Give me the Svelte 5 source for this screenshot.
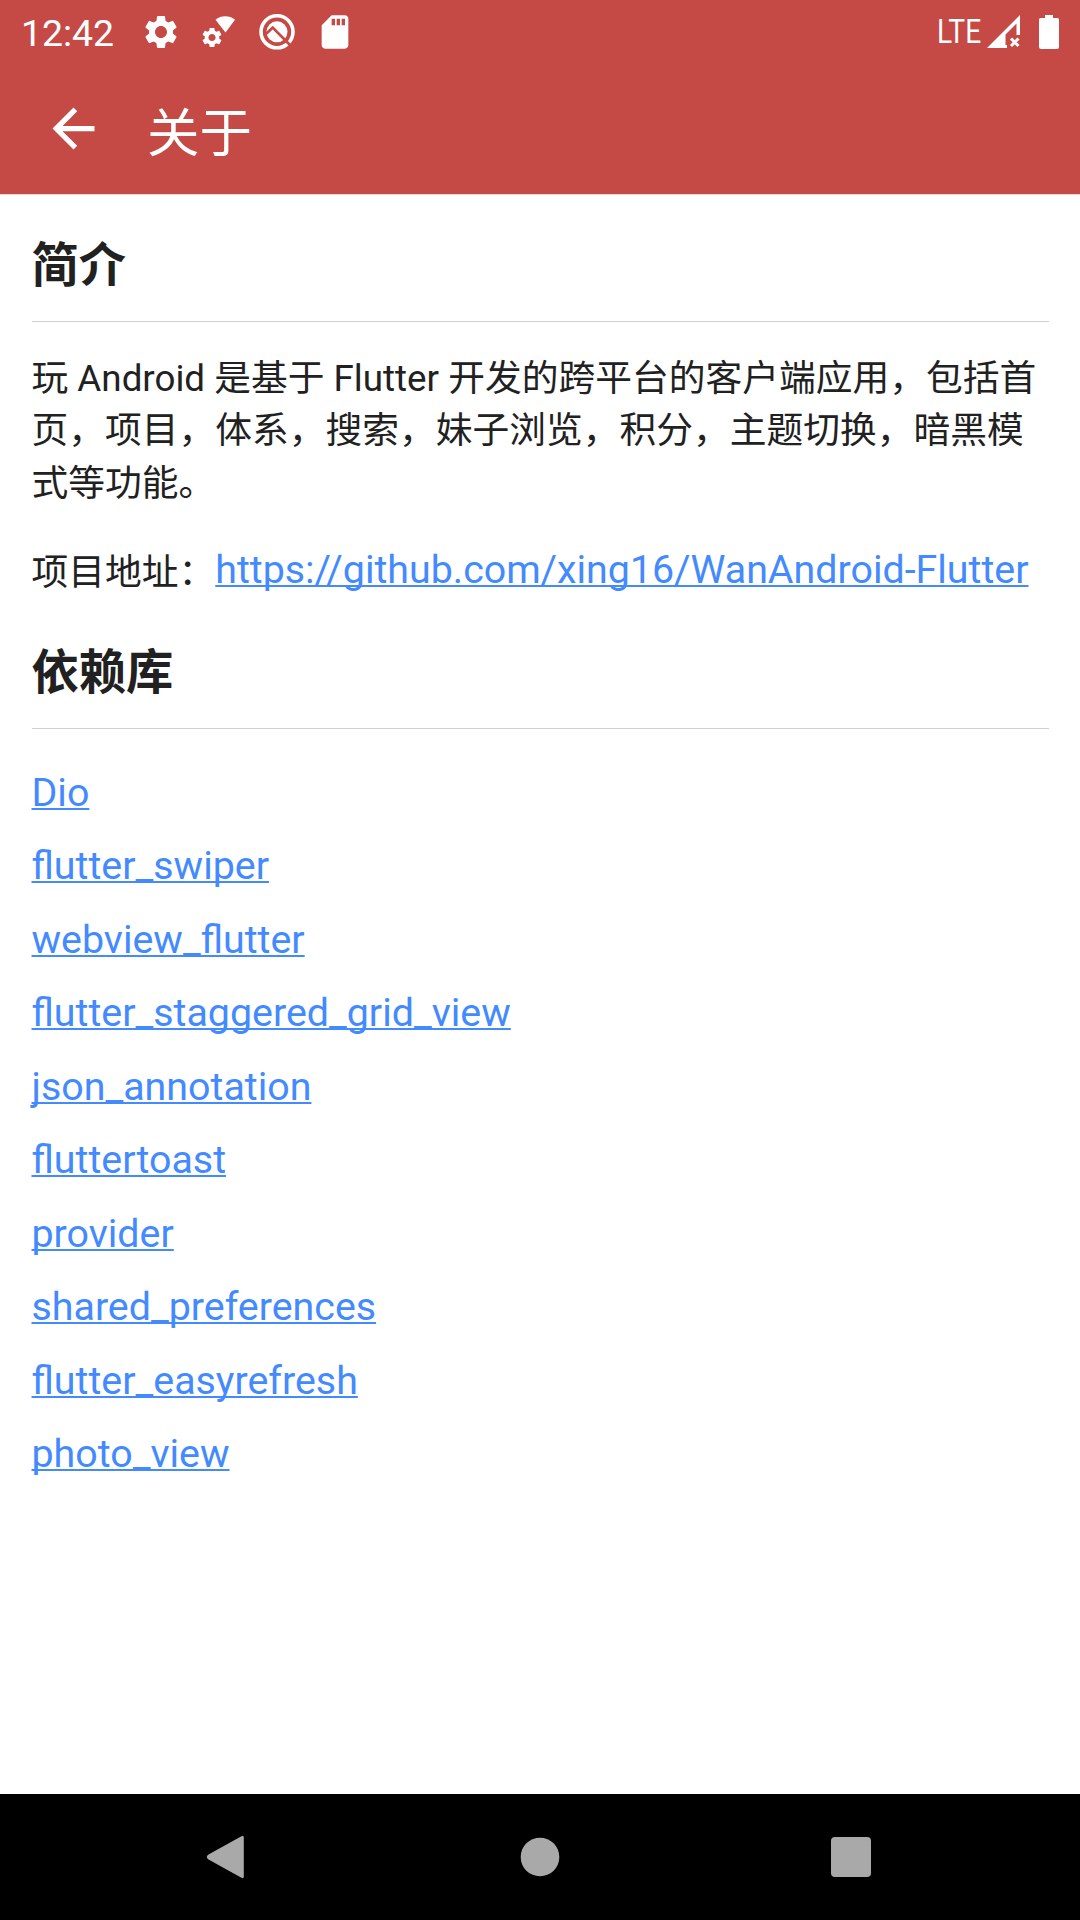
<script>
  const links = [
    'Dio',
    'flutter_swiper',
    'webview_flutter',
    'flutter_staggered_grid_view',
    'json_annotation',
    'fluttertoast',
    'provider',
    'shared_preferences',
    'flutter_easyrefresh',
    'photo_view',
  ];
  const gear =
    'M19.14 12.94c.04-.3.06-.61.06-.94 0-.32-.02-.64-.07-.94l2.03-1.58c.18-.14.23-.41.12-.61l-1.92-3.32c-.12-.22-.37-.29-.59-.22l-2.39.96c-.5-.38-1.03-.7-1.62-.94l-.36-2.54c-.04-.24-.24-.41-.48-.41h-3.84c-.24 0-.43.17-.47.41l-.36 2.54c-.59.24-1.13.57-1.62.94l-2.39-.96c-.22-.08-.47 0-.59.22L2.74 8.87c-.12.21-.08.47.12.61l2.03 1.58c-.05.3-.09.63-.09.94s.02.64.07.94l-2.03 1.58c-.18.14-.23.41-.12.61l1.92 3.32c.12.22.37.29.59.22l2.39-.96c.5.38 1.03.7 1.62.94l.36 2.54c.05.24.24.41.48.41h3.84c.24 0 .44-.17.47-.41l.36-2.54c.59-.24 1.13-.56 1.62-.94l2.39.96c.22.08.47 0 .59-.22l1.92-3.32c.12-.22.07-.47-.12-.61l-2.01-1.58zM12 15.6c-1.98 0-3.6-1.62-3.6-3.6s1.62-3.6 3.6-3.6 3.6 1.62 3.6 3.6-1.62 3.6-3.6 3.6z';
</script>

<div class="screen">
  <header>
    <div class="status">
      <span class="time">12:42</span>
      <svg class="notif" viewBox="0 0 24 24"><path d={gear} /></svg>
      <svg class="notif" viewBox="0 0 40 40">
        <path d="M14.5 7.7C20 3.2 28.500 3.2 34 7.7L24.500 20.500Z" transform="translate(2 0)" />
        <g transform="translate(1 13.500)"><path d={gear} /></g>
      </svg>
      <svg class="notif" viewBox="0 0 40 40">
        <circle cx="20" cy="19.800" r="16" fill="none" stroke="#fff" stroke-width="3.600" />
        <circle cx="20" cy="19.800" r="10.500" />
        <path d="M9.500 21.500L15.700 15.600L34 34" fill="none" stroke="#c54a46" stroke-width="2.800" />
      </svg>
      <svg class="notif" viewBox="0 0 24 24">
        <path d="M18 2h-8L4.020 8 4 20c0 1.100.9 2 2 2h12c1.100 0 2-.9 2-2V4c0-1.100-.9-2-2-2zm-6 6h-2V4h2v4zm3 0h-2V4h2v4zm3 0h-2V4h2v4z" />
      </svg>
      <span class="space"></span>
      <span class="lte">LTE</span>
      <svg class="signal" viewBox="0 0 34 34">
        <path d="M0 33L33 0V20H29.500V8.500L18.500 19.500V30H20V33Z" />
        <path d="M24 23.500L31.500 31M31.500 23.500L24 31" stroke="#fff" stroke-width="3" />
      </svg>
      <svg class="battery" viewBox="0 0 20 34">
        <path d="M6 0H14V3H18.500Q20 3 20 4.500V32Q20 34 18 34H2Q0 34 0 32V4.500Q0 3 1.500 3H6Z" />
      </svg>
    </div>
    <div class="bar">
      <svg class="back" viewBox="0 0 24 24"><path d="M20 11H7.830l5.590-5.590L12 4l-8 8 8 8 1.410-1.410L7.830 13H20v-2z" /></svg>
      <h1>关于</h1>
    </div>
  </header>

  <main>
    <h2>简介</h2>
    <p>玩 Android 是基于 Flutter 开发的跨平台的客户端应用，包括首页，项目，体系，搜索，妹子浏览，积分，主题切换，暗黑模式等功能。</p>
    <div class="address">项目地址：<span class="link">https://github.com/xing16/WanAndroid-Flutter</span></div>
    <h2 class="second">依赖库</h2>
    <ul>
      {#each links as name}
        <li><span class="link">{name}</span></li>
      {/each}
    </ul>
  </main>

  <nav>
    <svg viewBox="0 0 48 48"><path d="M38.800 4.500V43.500Q38.800 46.500 36 44.500L3.500 26.500Q0 24 3.500 21.500L36 3.500Q38.800 1.500 38.800 4.500Z" /></svg>
    <svg viewBox="0 0 48 48"><circle cx="24" cy="24" r="19.300" /></svg>
    <svg viewBox="0 0 48 48"><rect x="4" y="4" width="40" height="40" rx="4" /></svg>
  </nav>
</div>

<style>
  :global(body) {
    background: #fff;
  }
  .screen {
    width: 1080px;
    height: 1920px;
    display: flex;
    flex-direction: column;
    font-family: Roboto, 'Noto Sans CJK SC', sans-serif;
    color: #212121;
    background: #fff;
  }
  header {
    box-sizing: border-box;
    height: 195px;
    background: #c54a46;
    border-bottom: 1px solid #f1d2d1;
    color: #fff;
    flex: none;
  }
  svg {
    display: block;
    flex: none;
    fill: currentColor;
  }
  .status {
    height: 63px;
    display: flex;
    align-items: center;
    padding: 0 21px;
  }
  .time {
    width: 120px;
    font-size: 37.4px;
    line-height: 63px;
    padding-top: 3px;
  }
  .notif {
    width: 40px;
    height: 40px;
    margin-right: 18px;
  }
  .space {
    flex: 1;
  }
  .lte {
    width: 50px;
    font-size: 32.5px;
    line-height: 44px;
    white-space: nowrap;
    transform: scaleX(0.865);
    transform-origin: left center;
  }
  .signal {
    width: 34px;
    height: 34px;
    margin-right: 18px;
  }
  .battery {
    width: 20px;
    height: 34px;
  }
  .bar {
    height: 131px;
    display: flex;
    align-items: center;
    padding-left: 42px;
  }
  .back {
    width: 63px;
    height: 63px;
  }
  h1 {
    margin: 0 0 0 42px;
    padding-top: 10px;
    font-size: 52.5px;
    font-weight: 400;
    line-height: 70px;
  }
  main {
    flex: 1;
    padding: 41px 31.5px 0;
  }
  h2 {
    margin: 0;
    height: 85px;
    font-size: 47.25px;
    line-height: 60px;
    font-weight: 700;
    border-bottom: 1px solid #d0d0d0;
  }
  p {
    margin: 30.5px 0 0;
    font-size: 36.75px;
    line-height: 52.5px;
  }
  .address {
    margin-top: 36.5px;
    font-size: 36.75px;
    line-height: 52px;
    height: 52px;
    white-space: nowrap;
  }
  .address .link {
    vertical-align: 2px;
    line-height: 40px;
  }
  .second {
    margin-top: 44px;
  }
  ul {
    list-style: none;
    margin: 27px 0 0;
    padding: 0;
  }
  li {
    height: 73.5px;
    line-height: 73.5px;
    font-size: 39.375px;
  }
  .link {
    color: #448aff;
    font-size: 39.375px;
    text-decoration: underline;
    text-decoration-thickness: 2px;
    text-underline-offset: 2px;
    text-decoration-skip-ink: none;
  }
  nav {
    height: 126px;
    flex: none;
    background: #000;
    color: #a9a9a9;
    display: flex;
    justify-content: space-between;
    align-items: center;
    padding: 0 205px;
  }
  nav svg {
    width: 48px;
    height: 48px;
  }
</style>
